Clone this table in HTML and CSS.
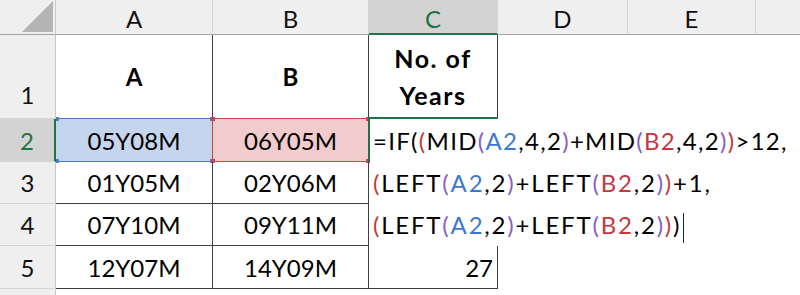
FILE: index.html
```html
<!DOCTYPE html>
<html>
<head>
<meta charset="utf-8">
<link rel="stylesheet" href="styles.css">
</head>
<body>
<div class="sheet">
  <div class="ch corner"><svg class="tri" width="31" height="31" viewBox="0 0 31 31"><polygon points="31,0 31,31 0,31" fill="#b4b4b4"/></svg></div>
  <div class="ch">A</div>
  <div class="ch">B</div>
  <div class="ch ch-sel">C</div>
  <div class="ch">D</div>
  <div class="ch">E</div>
  <div class="ch ch-last"></div>

  <div class="rh rh-bottom">1</div>
  <div class="c bold">A</div>
  <div class="c bold">B</div>
  <div class="c bold wrap">No. of<br>Years</div>
  <div class="e"></div>
  <div class="e"></div>
  <div class="e"></div>

  <div class="rh rh-sel">2</div>
  <div class="c sel sel-a">05Y08M<span class="mark mark-a"><i class="dot tl"></i><i class="dot tr"></i><i class="dot bl"></i><i class="dot br"></i></span></div>
  <div class="c sel sel-b">06Y05M<span class="mark mark-b"><i class="dot tl"></i><i class="dot tr"></i><i class="dot bl"></i><i class="dot br"></i></span></div>
  <div class="f f1 active"><span class="active-frame"></span>=IF(<span class="r">(</span>MID<span class="p">(</span><span class="bl">A2</span>,4,2<span class="p">)</span>+MID<span class="p">(</span><span class="rd">B2</span>,4,2<span class="p">)</span><span class="r">)</span>&gt;12,</div>
  <div class="e"></div>
  <div class="e"></div>
  <div class="e"></div>

  <div class="rh">3</div>
  <div class="c">01Y05M</div>
  <div class="c">02Y06M</div>
  <div class="f f2"><span class="r">(</span>LEFT<span class="p">(</span><span class="bl">A2</span>,2<span class="p">)</span>+LEFT<span class="p">(</span><span class="rd">B2</span>,2<span class="p">)</span><span class="r">)</span>+1,</div>
  <div class="e"></div>
  <div class="e"></div>
  <div class="e"></div>

  <div class="rh">4</div>
  <div class="c">07Y10M</div>
  <div class="c">09Y11M</div>
  <div class="f f2"><span class="r">(</span>LEFT<span class="p">(</span><span class="bl">A2</span>,2<span class="p">)</span>+LEFT<span class="p">(</span><span class="rd">B2</span>,2<span class="p">)</span><span class="r">)</span>)<span class="caret"></span></div>
  <div class="e"></div>
  <div class="e"></div>
  <div class="e"></div>

  <div class="rh">5</div>
  <div class="c">12Y07M</div>
  <div class="c">14Y09M</div>
  <div class="c num">27</div>
  <div class="e"></div>
  <div class="e"></div>
  <div class="e"></div>

  <div class="rh rh-last"></div>
  <div class="e"></div>
  <div class="e"></div>
  <div class="e"></div>
  <div class="e"></div>
  <div class="e"></div>
  <div class="e"></div>
</div>
</body>
</html>
```

FILE: styles.css
```css
* { box-sizing: border-box; }
html, body { margin: 0; padding: 0; background: #ffffff; }
body { width: 800px; height: 295px; overflow: hidden; font-family: Lato, "Open Sans", sans-serif; color: #000; }

.sheet {
  display: grid;
  grid-template-columns: 56px 157px 156px 129px 130px 128px 44px;
  grid-template-rows: 35px 84px 43px 42px 42px 43px 6px;
  width: 800px;
  height: 295px;
  font-size: 24px;
}

.ch {
  background: #efefef;
  border-bottom: 1px solid #a3a3a3;
  border-right: 1px solid #d5d5d5;
  display: flex;
  align-items: center;
  justify-content: center;
  padding-top: 3px;
  color: #111;
}
.ch-last { border-right: none; }
.corner {
  justify-content: flex-end;
  align-items: flex-end;
  padding: 0 1px 1px 0;
  border-right: 1px solid #c9c9c9;
}
.tri { display: block; margin: 0 1px 1px 0; }
.ch-sel {
  background: #d3d3d3;
  color: #217346;
  border-bottom: 2px solid #217346;
}

.rh {
  background: #efefef;
  border-right: 1px solid #c9c9c9;
  border-bottom: 1px solid #d5d5d5;
  display: flex;
  align-items: center;
  justify-content: center;
  color: #111;
}
.rh-bottom { align-items: flex-end; padding-bottom: 9px; }
.rh-sel {
  background: #d3d3d3;
  color: #217346;
  border-right: 2px solid #217346;
}
.rh-last { border-bottom: none; }

.c {
  border-right: 1px solid #3f3f3f;
  border-bottom: 1px solid #3f3f3f;
  display: flex;
  align-items: center;
  justify-content: center;
  position: relative;
}
.bold { font-weight: 700; }
.wrap { text-align: center; line-height: 37px; padding-top: 1px; font-size: 25px; letter-spacing: 1.5px; }
.num { justify-content: flex-end; padding-right: 4px; }

.sel-a { background: #c6d5ee; }
.sel-b { background: #f2cbcd; }
.mark {
  position: absolute;
  top: -1px;
  left: -1px;
  right: -1px;
  bottom: -1px;
  border: 1px solid;
}
.mark-a { border-color: #4a7bd0; left: 0; border-left: none; }
.mark-b { border-color: #c8464c; }
.dot {
  position: absolute;
  width: 4px;
  height: 4px;
}
.mark-a .dot { background: #4a7bd0; }
.mark-b .dot { background: #c8464c; }
.dot.tl { top: -2px; left: -2px; }
.dot.tr { top: -2px; right: -2px; }
.dot.bl { bottom: -2px; left: -2px; }
.dot.br { bottom: -2px; right: -2px; }
.mark-a .dot.tl, .mark-a .dot.bl { left: 0; width: 3px; }

.f {
  display: block;
  line-height: 42px;
  padding-left: 4px;
  white-space: nowrap;
  position: relative;
  z-index: 2;
}
.f1 { letter-spacing: 1.3px; padding-top: 1px; }
.f2 { letter-spacing: 1.8px; }
.active-frame {
  position: absolute;
  top: -2px;
  left: -1px;
  width: 130px;
  height: 45px;
  border-top: 2px solid #217346;
  border-left: 2px solid #217346;
}
.r { color: #c23a3a; }
.p { color: #8a5cc6; }
.bl { color: #3d78d0; }
.rd { color: #c8363d; }
.caret {
  display: inline-block;
  width: 1px;
  height: 30px;
  background: #222;
  margin-left: 2px;
  vertical-align: middle;
}

.e { }
```
